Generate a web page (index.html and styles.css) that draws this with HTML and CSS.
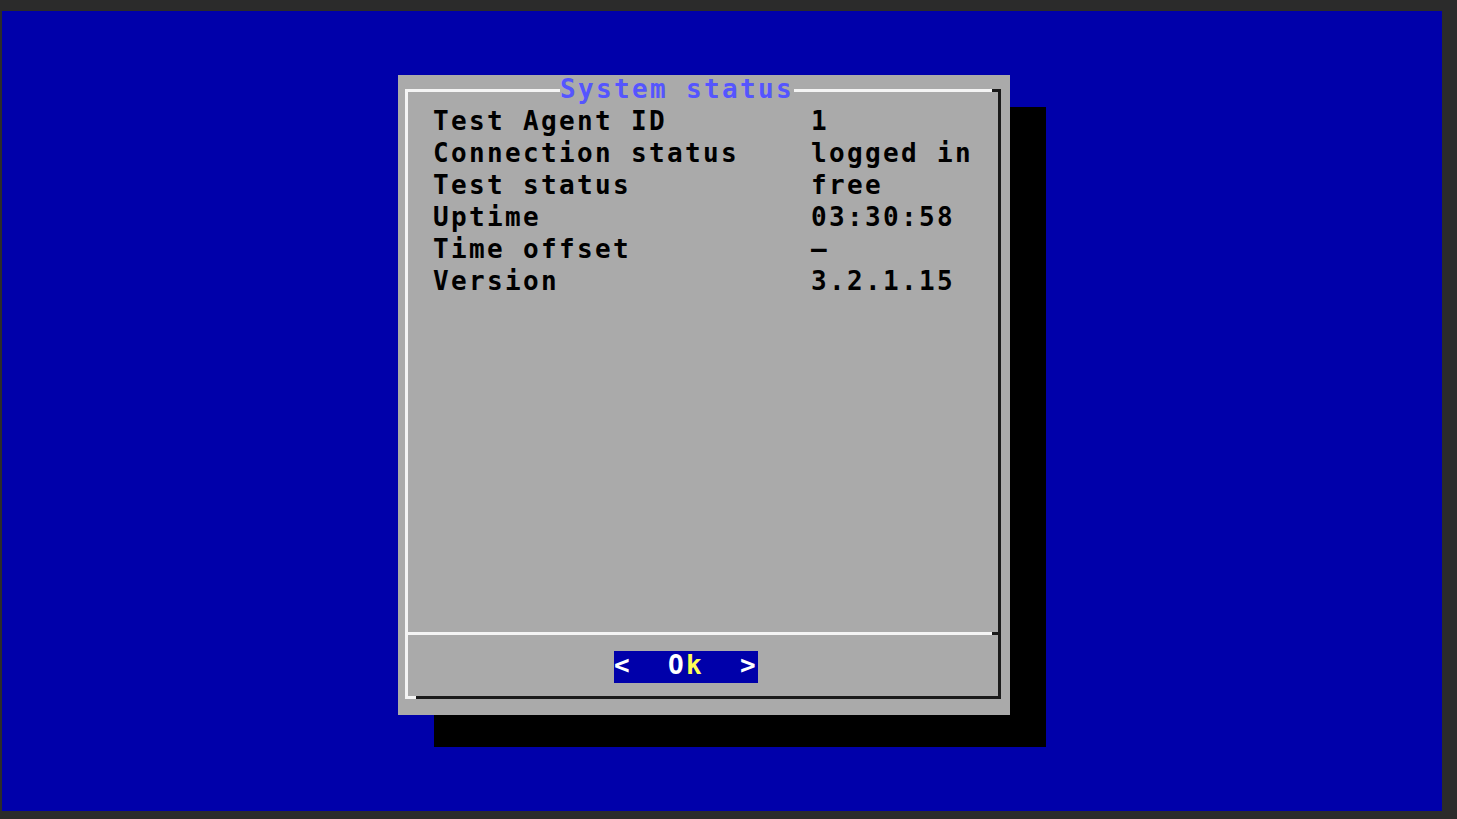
FILE: index.html
```html
<!DOCTYPE html>
<html>
<head>
<meta charset="utf-8">
<title>System status</title>
<link rel="stylesheet" href="styles.css">
</head>
<body>
<div class="screen">
  <div class="dialog">
    <div class="frame">
      <div class="titlebar">
        <span class="line line-a"></span>
        <span class="title">System status</span>
        <span class="line line-b"></span>
        <span class="line-dark"></span>
      </div>
      <div class="content">
        <div class="row"><span class="label">Test Agent ID</span><span class="value">1</span></div>
        <div class="row"><span class="label">Connection status</span><span class="value">logged in</span></div>
        <div class="row"><span class="label">Test status</span><span class="value">free</span></div>
        <div class="row"><span class="label">Uptime</span><span class="value">03:30:58</span></div>
        <div class="row"><span class="label">Time offset</span><span class="value">–</span></div>
        <div class="row"><span class="label">Version</span><span class="value">3.2.1.15</span></div>
      </div>
      <div class="sep"><span class="sep-light"></span><span class="sep-dark"></span></div>
      <div class="buttons"><span class="btn">&lt;  <span class="btn-o">O</span><span class="btn-k">k</span>  &gt;</span></div>
      <div class="bottom"><span class="bottom-light"></span><span class="bottom-dark"></span></div>
    </div>
  </div>
</div>
</body>
</html>
```

FILE: styles.css
```css
html, body {
  margin: 0;
}

body {
  background: #2b2b2b;
  width: 1457px;
  height: 819px;
  overflow: hidden;
  padding: 11px 0 0 2px;
  box-sizing: border-box;
}

.screen {
  width: 1440px;
  height: 800px;
  background: #0000aa;
  padding: 64px 0 0 396px;
  box-sizing: border-box;
}

.dialog {
  width: 612px;
  height: 640px;
  background: #aaaaaa;
  box-shadow: 36px 32px 0 0 #000;
  padding: 14px 9px 16px 7px;
  box-sizing: border-box;
  font-family: "DejaVu Sans Mono", monospace;
  font-weight: bold;
  font-size: 26px;
  letter-spacing: 2.35px;
  color: #000;
}

.frame {
  height: 610px;
  border-left: 3px solid #f4f4f4;
  border-right: 3px solid #1a1a1a;
  box-sizing: border-box;
  display: flex;
  flex-direction: column;
}

.titlebar {
  display: flex;
  height: 32px;
  margin-top: -14px;
  flex: none;
}

.line {
  margin-top: 14px;
  height: 3px;
  background: #f4f4f4;
}

.line-a {
  width: 152px;
}

.title {
  width: 234px;
  color: #5555ff;
  line-height: 28px;
  padding-bottom: 4px;
  white-space: pre;
}

.line-b {
  flex: 1;
}

.line-dark {
  width: 6px;
  margin-top: 14px;
  height: 3px;
  background: #1a1a1a;
}

.content {
  height: 525px;
  padding-left: 25px;
  flex: none;
  box-sizing: border-box;
}

.row {
  display: flex;
  height: 32px;
  line-height: 28px;
}

.label {
  width: 378px;
  flex: none;
  white-space: pre;
}

.value {
  white-space: pre;
}

.sep {
  display: flex;
  height: 3px;
  flex: none;
}

.sep-light {
  flex: 1;
  background: #f4f4f4;
}

.sep-dark {
  width: 6px;
  background: #1a1a1a;
}

.buttons {
  margin-top: 16px;
  height: 32px;
  padding-left: 206px;
  flex: none;
}

.btn {
  display: inline-block;
  background: #0000aa;
  color: #ffffff;
  width: 144px;
  height: 32px;
  line-height: 28px;
  white-space: pre;
  overflow: hidden;
}

.btn-k {
  color: #ffff55;
}

.bottom {
  margin-top: 13px;
  display: flex;
  height: 3px;
  flex: none;
}

.bottom-light {
  width: 8px;
  background: #f4f4f4;
}

.bottom-dark {
  flex: 1;
  background: #1a1a1a;
}
```
